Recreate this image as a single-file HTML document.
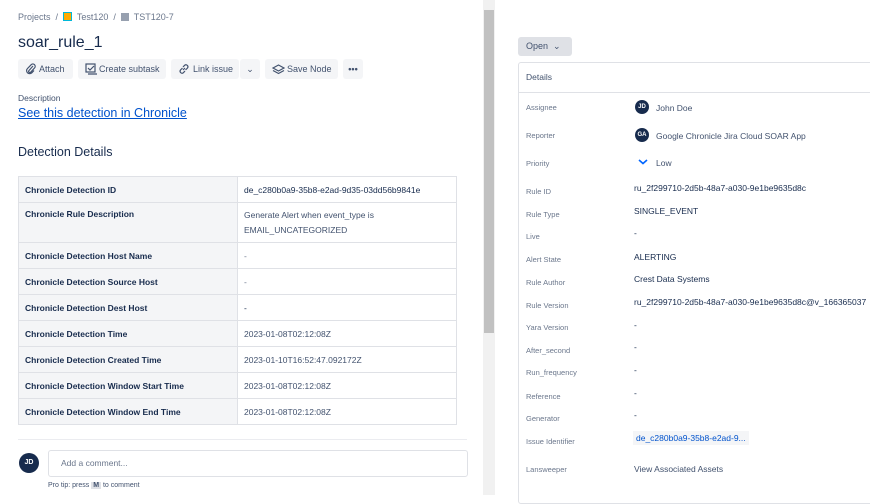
<!DOCTYPE html><html><head><style>
body{margin:0;width:870px;height:495px;overflow:hidden;background:#fff;font-family:"Liberation Sans",sans-serif;color:#172b4d;position:relative}
.a{position:absolute;white-space:nowrap}
.btn{position:absolute;top:59px;height:20px;background:#f4f5f7;border-radius:3px;font-size:9px;color:#42526e;line-height:20px;box-sizing:border-box;padding-left:22px}
.btn svg{position:absolute;left:7px;top:4px}
table{position:absolute;left:18px;top:176px;width:439px;border-collapse:collapse;font-size:8.5px}
td{border:1px solid #dfe1e6;padding:0 6px;height:25px}
td.k{background:#f4f5f7;font-weight:bold;width:206px}
.l{position:absolute;left:526px;font-size:7.5px;color:#6b778c}
.v{position:absolute;left:634px;font-size:8.5px;color:#172b4d}
.av{position:absolute;width:14px;height:14px;border-radius:50%;background:#172b4d;color:#fff;font-size:6px;text-align:center;line-height:14px;font-weight:bold}
</style></head><body>
<div class="a" style="left:18px;top:12px;font-size:9px;color:#6b778c">Projects &nbsp;/&nbsp; <span style="display:inline-block;width:7px;height:7px;border:1px solid #00b8d9;background:#ffab00;vertical-align:-1px"></span>&nbsp; Test120 &nbsp;/&nbsp; <span style="display:inline-block;width:8px;height:8px;background:#97a0af;vertical-align:-1px"></span>&nbsp; TST120-7</div>
<div class="a" style="left:18px;top:34px;font-size:16px">soar_rule_1</div>
<div class="btn" style="left:18px;width:55px;padding-left:21px"><svg width="12" height="12" viewBox="0 0 12 12"><path d="M8 3 L4 7.5 a1.2 1.2 0 0 0 1.7 1.7 L9.5 5 a2.3 2.3 0 0 0-3.3-3.3 L2.5 5.5 a3 3 0 0 0 4.3 4.3 L9 7.5" fill="none" stroke="#42526e" stroke-width="1.2"/></svg>Attach</div>
<div class="btn" style="left:78px;width:88px;padding-left:21px"><svg width="12" height="12" viewBox="0 0 12 12"><rect x="1" y="1" width="9" height="8" fill="none" stroke="#42526e" stroke-width="1.2"/><path d="M3 5l2 2 4-4M3 11h9" fill="none" stroke="#42526e" stroke-width="1.2"/></svg>Create subtask</div>
<div class="btn" style="left:171px;width:68px;padding-left:22px"><svg width="12" height="12" viewBox="0 0 12 12"><path d="M5 7 L7 5 M4.5 5 L2.5 7 a2 2 0 0 0 2.8 2.8 L7 8 M5 4 L6.7 2.2 a2 2 0 0 1 2.8 2.8 L7.5 7" fill="none" stroke="#42526e" stroke-width="1.2"/></svg>Link issue</div>
<div class="btn" style="left:240px;width:20px;padding-left:0;text-align:center">⌄</div>
<div class="btn" style="left:265px;width:73px;padding-left:22px"><svg width="13" height="12" viewBox="0 0 13 12"><path d="M1 5 L6.5 2 L12 5 L6.5 8Z M1 7.5 L6.5 10.5 L12 7.5" fill="none" stroke="#42526e" stroke-width="1.2"/></svg>Save Node</div>
<div class="btn" style="left:343px;width:20px;padding-left:0;text-align:center;font-weight:bold">•••</div>
<div class="a" style="left:18px;top:93px;font-size:8.5px;color:#42526e">Description</div>
<div class="a" style="left:18px;top:106px;font-size:12.5px;color:#0052cc;text-decoration:underline">See this detection in Chronicle</div>
<div class="a" style="left:18px;top:145px;font-size:12.5px">Detection Details</div>
<table>
<tr><td class="k">Chronicle Detection ID</td><td>de_c280b0a9-35b8-e2ad-9d35-03dd56b9841e</td></tr>
<tr><td class="k" style="height:33px;vertical-align:top;padding-top:6px">Chronicle Rule Description</td><td style="color:#42526e;line-height:15px">Generate Alert when event_type is<br>EMAIL_UNCATEGORIZED</td></tr>
<tr><td class="k">Chronicle Detection Host Name</td><td style="color:#6b778c">-</td></tr>
<tr><td class="k">Chronicle Detection Source Host</td><td style="color:#6b778c">-</td></tr>
<tr><td class="k">Chronicle Detection Dest Host</td><td>-</td></tr>
<tr><td class="k">Chronicle Detection Time</td><td style="color:#42526e">2023-01-08T02:12:08Z</td></tr>
<tr><td class="k">Chronicle Detection Created Time</td><td style="color:#42526e">2023-01-10T16:52:47.092172Z</td></tr>
<tr><td class="k">Chronicle Detection Window Start Time</td><td style="color:#42526e">2023-01-08T02:12:08Z</td></tr>
<tr><td class="k">Chronicle Detection Window End Time</td><td style="color:#42526e">2023-01-08T02:12:08Z</td></tr>
</table>
<div class="a" style="left:18px;top:439px;width:449px;height:1px;background:#ebecf0"></div>
<div class="av" style="left:19px;top:453px;width:20px;height:20px;line-height:20px;font-size:7px">JD</div>
<div class="a" style="left:48px;top:450px;width:418px;height:25px;border:1px solid #dfe1e6;border-radius:3px;font-size:8.5px;color:#6b778c;line-height:25px;text-indent:12px">Add a comment...</div>
<div class="a" style="left:48px;top:482px;font-size:7px;color:#42526e">Pro tip: press <span style="background:#dfe1e6;padding:0 2px;font-weight:bold">M</span> to comment</div>
<div class="a" style="left:483px;top:0;width:12px;height:495px;background:#f1f1f1"></div>
<div class="a" style="left:484px;top:10px;width:10px;height:323px;background:#c1c1c1"></div>
<div class="a" style="left:518px;top:37px;width:54px;height:19px;background:#dfe1e6;border-radius:3px;font-size:9px;color:#42526e;line-height:19px;text-indent:8px">Open &nbsp;⌄</div>
<div class="a" style="left:518px;top:62px;width:360px;height:440px;border:1px solid #dfe1e6;border-radius:3px"></div>
<div class="a" style="left:519px;top:92px;width:360px;height:1px;background:#dfe1e6"></div>
<div class="a" style="left:526px;top:72px;font-size:8.5px;color:#42526e">Details</div>
<div class="l" style="top:103px">Assignee</div><div class="av" style="left:635px;top:100px">JD</div><div class="v" style="left:656px;top:103px;color:#42526e">John Doe</div>
<div class="l" style="top:131px">Reporter</div><div class="av" style="left:635px;top:128px">GA</div><div class="v" style="left:656px;top:131px;color:#42526e">Google Chronicle Jira Cloud SOAR App</div>
<div class="l" style="top:159px">Priority</div><svg class="a" style="left:638px;top:159px" width="10" height="6" viewBox="0 0 10 6"><path d="M1 1 L5 4.5 L9 1" fill="none" stroke="#0065ff" stroke-width="1.6"/></svg><div class="v" style="left:656px;top:158px;color:#42526e">Low</div>
<div class="l" style="top:187px">Rule ID</div><div class="v" style="top:183px">ru_2f299710-2d5b-48a7-a030-9e1be9635d8c</div>
<div class="l" style="top:210px">Rule Type</div><div class="v" style="top:206px">SINGLE_EVENT</div>
<div class="l" style="top:232px">Live</div><div class="v" style="top:228px">-</div>
<div class="l" style="top:255px">Alert State</div><div class="v" style="top:252px">ALERTING</div>
<div class="l" style="top:278px">Rule Author</div><div class="v" style="top:274px">Crest Data Systems</div>
<div class="l" style="top:301px">Rule Version</div><div class="v" style="top:297px">ru_2f299710-2d5b-48a7-a030-9e1be9635d8c@v_166365037</div>
<div class="l" style="top:323px">Yara Version</div><div class="v" style="top:320px">-</div>
<div class="l" style="top:346px">After_second</div><div class="v" style="top:342px">-</div>
<div class="l" style="top:368px">Run_frequency</div><div class="v" style="top:365px">-</div>
<div class="l" style="top:392px">Reference</div><div class="v" style="top:388px">-</div>
<div class="l" style="top:414px">Generator</div><div class="v" style="top:410px">-</div>
<div class="l" style="top:437px">Issue Identifier</div><div class="v" style="top:431px;background:#f4f5f7;color:#0052cc;padding:2px 3px;left:633px">de_c280b0a9-35b8-e2ad-9...</div>
<div class="l" style="top:465px">Lansweeper</div><div class="v" style="top:464px;color:#42526e">View Associated Assets</div>
</body></html>
